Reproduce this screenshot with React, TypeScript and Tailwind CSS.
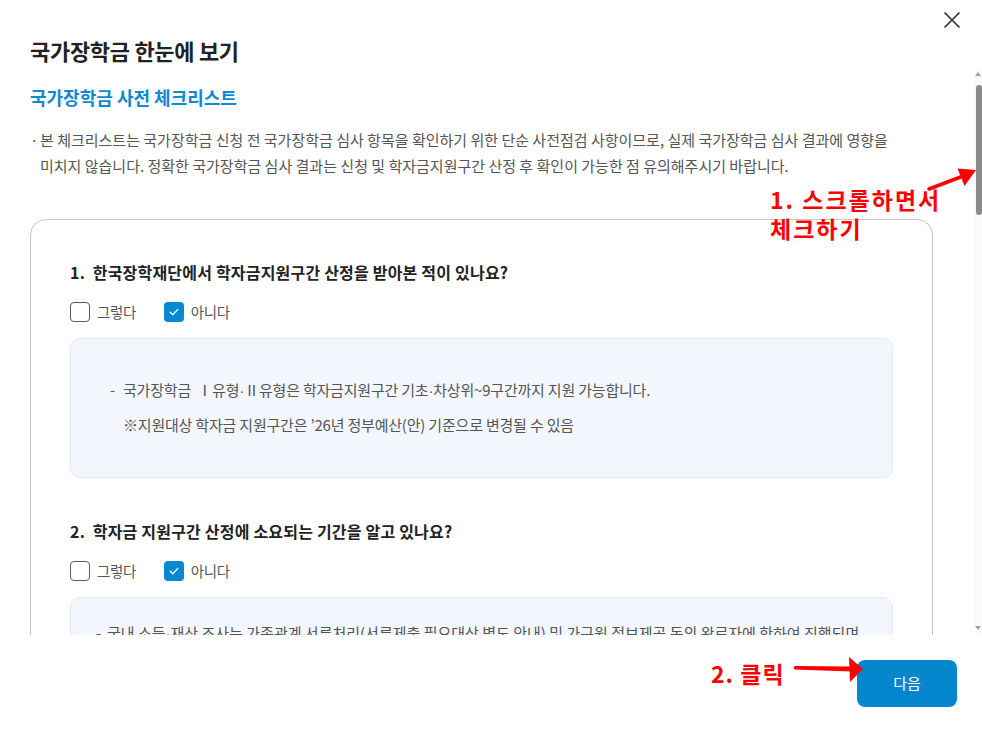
import React from "react";

const Dot = () => <span className="font-['Liberation_Sans',sans-serif]">·</span>;

function CheckBox({ checked, label }: { checked: boolean; label: string }) {
  return (
    <label className="flex items-center gap-[7px]">
      {checked ? (
        <span className="flex h-[20px] w-[20px] items-center justify-center rounded-[4px] bg-[#0788d3]">
          <svg width="20" height="20" viewBox="0 0 20 20" fill="none">
            <polyline points="6.2,10.2 8.8,12.8 13.8,7.4" stroke="#fff" strokeWidth="1.3" strokeLinecap="round" strokeLinejoin="round" />
          </svg>
        </span>
      ) : (
        <span className="h-[20px] w-[20px] rounded-[4px] border border-[#5c5c5c] bg-white" />
      )}
      <span className="text-[14.5px] leading-[20px] tracking-[-0.4px] text-[#555]">{label}</span>
    </label>
  );
}

function Question({
  no,
  title,
  mt,
  children,
}: {
  no: number;
  title: string;
  mt: string;
  children: React.ReactNode;
}) {
  return (
    <div className={mt}>
      <p className="text-[16px] font-bold leading-[24px] tracking-[0.2px] text-[#222]">
        {no}.&nbsp; {title}
      </p>
      <div className="mt-[18px] flex gap-[28px]">
        <CheckBox checked={false} label="그렇다" />
        <CheckBox checked label="아니다" />
      </div>
      {children}
    </div>
  );
}

export default function App() {
  return (
    <div className="relative flex h-[730px] w-[982px] flex-col overflow-hidden bg-white font-['Noto_Sans_CJK_KR','Noto_Sans',sans-serif] text-[#555]">
      <button type="button" className="absolute right-[21px] top-[11px]">
        <svg width="18" height="18" viewBox="0 0 18 18" fill="none">
          <path d="M1.5 1.5 L16.5 16.5 M16.5 1.5 L1.5 16.5" stroke="#333" strokeWidth="1.7" />
        </svg>
      </button>

      <div className="h-[68px] shrink-0 pl-[30px] pt-[34px]">
        <h1 className="text-[22px] font-bold leading-[32px] tracking-[-0.3px] text-[#222]">
          국가장학금 한눈에 보기
        </h1>
      </div>

      <div className="flex h-[567px] shrink-0">
        <div className="flex-1 overflow-hidden pl-[30px] pr-[41px] pt-[17px]">
          <h2 className="text-[18px] font-bold leading-[24px] text-[#1088d2]">
            국가장학금 사전 체크리스트
          </h2>
          <div className="mt-[18px] flex text-[15px] leading-[26px] text-[#555]">
            <span className="w-[10px] shrink-0">·</span>
            <p className="w-[870px] break-keep">
              본 체크리스트는 국가장학금 신청 전 국가장학금 심사 항목을 확인하기 위한 단순 사전점검 사항이므로, 실제 국가장학금 심사 결과에 영향을
              미치지 않습니다. 정확한 국가장학금 심사 결과는 신청 및 학자금지원구간 산정 후 확인이 가능한 점 유의해주시기 바랍니다.
            </p>
          </div>

          <div className="mt-[40px] rounded-[16px] border border-[#c6c6c6] px-[39px] pb-[40px] pt-[40px]">
            <Question no={1} title="한국장학재단에서 학자금지원구간 산정을 받아본 적이 있나요?" mt="mt-0">
              <div className="mt-[16px] h-[140px] rounded-[10px] border border-[#e2e8f2] bg-[#f3f7fd] pl-[39px] pt-[34px] text-[15px] leading-[34px] tracking-[-0.2px] text-[#555]">
                <div className="flex">
                  <span className="w-[13px] shrink-0">-</span>
                  <div>
                    <p>
                      국가장학금&nbsp; Ⅰ유형<Dot />Ⅱ유형은 학자금지원구간 기초<Dot />차상위~9구간까지 지원 가능합니다.
                    </p>
                    <p>※지원대상 학자금 지원구간은 ’26년 정부예산(안) 기준으로 변경될 수 있음</p>
                  </div>
                </div>
              </div>
            </Question>

            <Question no={2} title="학자금 지원구간 산정에 소요되는 기간을 알고 있나요?" mt="mt-[41px]">
              <div className="mt-[16px] rounded-[10px] border border-[#e2e8f2] bg-[#f3f7fd] pb-[30px] pl-[25px] pt-[18px] text-[15px] leading-[34px] text-[#555]">
                <div className="flex">
                  <span className="w-[11px] shrink-0">-</span>
                  <div className="break-keep">
                    <p>
                      국내 소득<Dot />재산 조사는 가족관계 서류처리(서류제출 필요대상 별도 안내) 및 가구원 정보제공 동의 완료자에 한하여 진행되며
                    </p>
                    <p>약 6주 이상 소요됩니다.</p>
                  </div>
                </div>
              </div>
            </Question>
          </div>
        </div>

        <div className="flex w-[8px] shrink-0 flex-col items-end bg-[#fafafa]">
          <svg width="8" height="8" viewBox="0 0 8 8" className="mt-[2px]">
            <polygon points="4,2 7,6 1,6" fill="#a3a3a3" />
          </svg>
          <div className="mt-[7px] h-[130px] w-[6px] rounded-[3px] bg-[#8b8b8b]" />
          <div className="flex-1" />
          <svg width="8" height="8" viewBox="0 0 8 8" className="mb-[3px]">
            <polygon points="1,2 7,2 4,6" fill="#a3a3a3" />
          </svg>
        </div>
      </div>

      <div className="flex flex-1 justify-end pr-[25px] pt-[25px]">
        <button type="button" className="h-[47px] w-[100px] rounded-[8px] bg-[#0486cd] text-[15px] text-white">
          다음
        </button>
      </div>

      {/* annotations */}
      <div className="absolute left-[770px] top-[185px] text-[23px] font-bold leading-[29px] tracking-[2px] text-[#ff0000]">
        <p>1. 스크롤하면서</p>
        <p>체크하기</p>
      </div>
      <svg className="absolute left-[920px] top-[160px]" width="62" height="40" viewBox="920 160 62 40">
        <line x1="929" y1="189" x2="962" y2="176.5" stroke="#ff0000" strokeWidth="3.5" strokeLinecap="round" />
        <polygon points="976,170 964.5,186 957.5,168.5" fill="#ff0000" />
      </svg>
      <div className="absolute left-[711px] top-[657px] text-[23px] font-bold leading-[32px] tracking-[1px] text-[#ff0000]">
        2. 클릭
      </div>
      <svg className="absolute left-[790px] top-[652px]" width="80" height="36" viewBox="790 652 80 36">
        <polygon points="795,666 851,666.5 851,671.5 795,669.5" fill="#ff0000" />
        <circle cx="795.5" cy="667.7" r="1.8" fill="#ff0000" />
        <polygon points="849,657 863,669 850,682" fill="#ff0000" />
      </svg>
    </div>
  );
}
